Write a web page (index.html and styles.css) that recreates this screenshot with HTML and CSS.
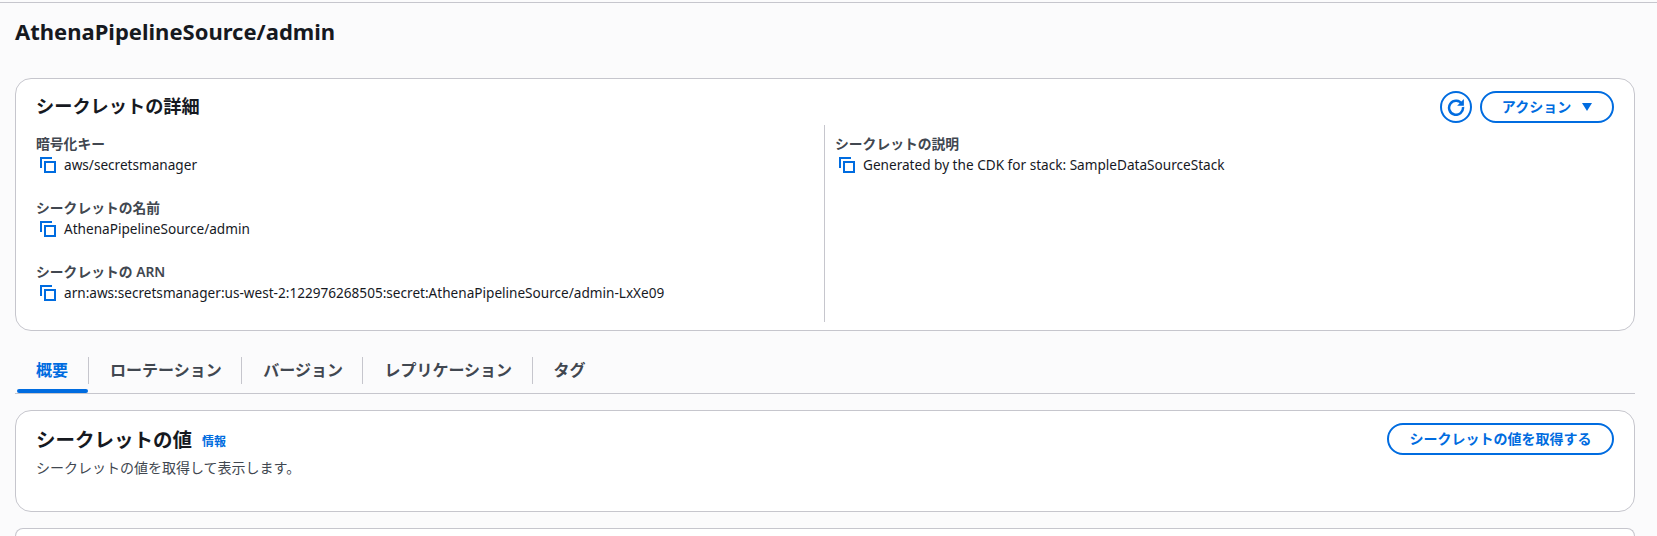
FILE: index.html
```html
<!DOCTYPE html>
<html lang="ja">
<head>
<meta charset="utf-8">
<title>AthenaPipelineSource/admin</title>
<link rel="stylesheet" href="styles.css">
</head>
<body>
<svg class="defs" width="0" height="0" aria-hidden="true">
  <symbol id="copy" viewBox="0 0 16 16">
    <path d="M1 11V1h11" fill="none" stroke="currentColor" stroke-width="2"/>
    <rect x="5" y="5" width="10" height="10" fill="none" stroke="currentColor" stroke-width="2"/>
  </symbol>
</svg>
<main class="page">
  <h1 class="title">AthenaPipelineSource/admin</h1>

  <section class="card details">
    <header class="card-head">
      <h2 class="card-title">シークレットの詳細</h2>
      <div class="actions">
        <button class="btn-icon" aria-label="更新">
          <svg viewBox="0 0 16 16" width="18" height="18"><path d="M13.4 5.6A6.2 6.2 0 1 0 14.2 8" fill="none" stroke="currentColor" stroke-width="2.2"/><path d="M15 .8v6H9z" fill="currentColor"/></svg>
        </button>
        <button class="btn btn-action">アクション<span class="caret"></span></button>
      </div>
    </header>
    <div class="columns">
      <div class="col col-left">
        <div class="field">
          <div class="label">暗号化キー</div>
          <div class="value"><svg class="copy"><use href="#copy"/></svg><span>aws/secretsmanager</span></div>
        </div>
        <div class="field">
          <div class="label">シークレットの名前</div>
          <div class="value"><svg class="copy"><use href="#copy"/></svg><span>AthenaPipelineSource/admin</span></div>
        </div>
        <div class="field">
          <div class="label">シークレットの ARN</div>
          <div class="value"><svg class="copy"><use href="#copy"/></svg><span>arn:aws:secretsmanager:us-west-2:122976268505:secret:AthenaPipelineSource/admin-LxXe09</span></div>
        </div>
      </div>
      <div class="col col-right">
        <div class="field">
          <div class="label">シークレットの説明</div>
          <div class="value"><svg class="copy"><use href="#copy"/></svg><span>Generated by the CDK for stack: SampleDataSourceStack</span></div>
        </div>
      </div>
    </div>
  </section>

  <nav class="tabs">
    <a class="tab tab-active">概要</a>
    <a class="tab">ローテーション</a>
    <a class="tab">バージョン</a>
    <a class="tab">レプリケーション</a>
    <a class="tab">タグ</a>
  </nav>

  <section class="card value-card">
    <div class="value-text">
      <h2 class="card-title value-title">シークレットの値 <a class="info">情報</a></h2>
      <p class="desc">シークレットの値を取得して表示します。</p>
    </div>
    <button class="btn btn-get">シークレットの値を取得する</button>
  </section>

  <section class="card stub"></section>
</main>
</body>
</html>
```
FILE: styles.css
```css
* { box-sizing: border-box; }
html { margin: 0; height: 536px; overflow: hidden; }
body {
  margin: 2px 0 0;
  height: 534px;
  overflow: hidden;
  background: #fbfbfc;
  color: #16191f;
  font-family: "Noto Sans", "Noto Sans CJK JP", sans-serif;
  border-top: 1px solid #c6c6cd;
}
.defs { display: block; height: 0; }
.page { padding: 0 22px 0 15px; }
.title {
  margin: 0;
  padding-top: 13px;
  height: 75px;
  font-size: 22px;
  line-height: 30px;
  font-weight: 700;
}
.card {
  background: #fff;
  border: 1px solid #c6c6cd;
  border-radius: 16px;
}
.details { height: 253px; padding: 14px 20px 0; }
.card-head { display: flex; justify-content: space-between; align-items: flex-start; height: 32px; }
.card-title {
  margin: 0;
  font-size: 18.2px;
  line-height: 26px;
  font-weight: 600;
}
.value-title { font-size: 19.5px; }
.actions { display: flex; gap: 8px; align-items: center; margin-top: -2px; }
.btn-icon {
  width: 32px; height: 32px;
  border: 2px solid #006ce0;
  border-radius: 50%;
  background: #fff;
  color: #006ce0;
  padding: 0;
  display: flex; align-items: center; justify-content: center;
}
.btn {
  height: 32px;
  border: 2px solid #006ce0;
  border-radius: 16px;
  background: #fff;
  color: #006ce0;
  font: 600 14px/1 "Noto Sans", "Noto Sans CJK JP", sans-serif;
  display: flex; align-items: center; justify-content: center;
}
.btn-action { width: 134px; }
.caret {
  width: 0; height: 0;
  margin-left: 11px;
  border-left: 5.5px solid transparent;
  border-right: 5.5px solid transparent;
  border-top: 8px solid #006ce0;
}
.columns { display: flex; height: 197px; }
.col-left { width: 789px; border-right: 1px solid #c6c6cd; }
.col-right { padding-left: 10px; flex: 1; }
.field { height: 64px; padding-top: 10px; }
.label {
  font-size: 13.8px;
  line-height: 18px;
  font-weight: 600;
  color: #414750;
  margin-bottom: 2px;
}
.value {
  display: flex; align-items: center; gap: 8px;
  font-size: 13.6px;
  line-height: 20px;
  color: #16191f;
}
.copy {
  width: 16px; height: 16px;
  color: #006ce0;
  margin-left: 4px;
  flex: none;
}
.tabs {
  display: flex;
  height: 63px;
  padding: 21px 0 0 2px;
  border-bottom: 1px solid #c6c6cd;
}
.tab {
  position: relative;
  height: 41px;
  padding: 7px 19.5px 0 22px;
  font-size: 16px;
  line-height: 22px;
  font-weight: 600;
  color: #414750;
  white-space: nowrap;
}
.tab + .tab::before {
  content: "";
  position: absolute;
  left: 0; top: 5px;
  height: 27px; width: 1px;
  background: #c6c6cd;
}
.tab-active { color: #006ce0; padding: 7px 20px 0 19px; }
.tab-active::after {
  content: "";
  position: absolute;
  left: 0; right: 0; bottom: 0;
  height: 4px;
  border-radius: 2px;
  background: #006ce0;
}
.value-card {
  margin-top: 16px;
  height: 102px;
  padding: 16px 20px 0;
  display: flex;
  justify-content: space-between;
  align-items: flex-start;
}
.info { font-size: 12px; font-weight: 600; color: #006ce0; margin-left: 5px; position: relative; top: -1px; }
.desc { margin: 3px 0 0; font-size: 14px; line-height: 18px; color: #414750; }
.btn-get { width: 227px; flex: none; margin-top: -4px; }
.stub { margin-top: 16px; height: 8px; border-bottom: 0; border-radius: 16px 16px 0 0; }
```
